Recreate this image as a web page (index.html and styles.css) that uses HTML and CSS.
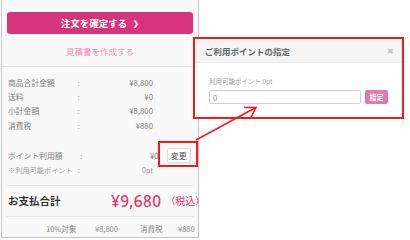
FILE: index.html
```html
<!DOCTYPE html>
<html lang="ja">
<head>
  <meta charset="UTF-8" />
  <title>ご注文内容</title>
  <link rel="stylesheet" href="styles.css">
</head>
<body>
  <div class="stage">
    <div class="summary">
      <div class="summary-top">
        <button class="btn-order">注文を確定する <span class="chev">&#x276F;</span></button>
        <div class="estimate">見積書を作成する</div>
      </div>

      <div class="rows">
        <div class="row"><span class="lbl">商品合計金額</span><span class="colon">:</span><span class="val">¥8,800</span></div>
        <div class="row"><span class="lbl">送料</span><span class="colon">:</span><span class="val">¥0</span></div>
        <div class="row"><span class="lbl">小計金額</span><span class="colon">:</span><span class="val">¥8,800</span></div>
        <div class="row"><span class="lbl">消費税</span><span class="colon">:</span><span class="val">¥880</span></div>
      </div>

      <div class="rows points">
        <div class="row"><span class="lbl">ポイント利用額</span><span class="colon">:</span><span class="val">¥0</span><button class="btn-change">変更</button></div>
        <div class="row small"><span class="lbl">※利用可能ポイント</span><span class="colon">:</span><span class="val">0pt</span></div>
      </div>

      <div class="total">
        <span class="total-lbl">お支払合計</span>
        <span class="total-val">¥9,680</span>
        <span class="total-tax">（税込）</span>
      </div>

      <div class="tax-row">
        <span class="t1">10%対象</span>
        <span class="t2">¥8,800</span>
        <span class="t3">消費税</span>
        <span class="t4">¥880</span>
      </div>
    </div>

    <!-- 注釈 -->
    <div class="mark"></div>

    <div class="modal">
      <div class="modal-head">
        <span class="modal-title">ご利用ポイントの指定</span>
        <span class="modal-close">&#x2716;</span>
      </div>
      <div class="modal-body">
        <div class="avail">利用可能ポイント 0pt</div>
        <div class="point-form">
          <input type="text" value="0" class="point-input" />
          <button class="btn-apply">指定</button>
        </div>
      </div>
    </div>

    <svg class="arrow" width="410" height="240" viewBox="0 0 410 240">
      <line x1="196" y1="140" x2="255" y2="108" stroke="#f21c1c" stroke-width="1.6" />
      <polyline points="244,107.5 256,107.5 251,117" fill="none" stroke="#f21c1c" stroke-width="1.6" stroke-linejoin="miter" />
    </svg>
  </div>
</body>
</html>
```

FILE: styles.css
```css
:root {
  --pink: #d6357c;
  --pink-light: #e07aa8;
  --text: #666;
  --line: #e3e3e3;
  --red: #f21c1c;
}

body {
  margin: 0;
  background: #fff;
  font-family: "Noto Sans CJK JP", "Noto Sans", sans-serif;
  color: var(--text);
}

.stage {
  position: relative;
  width: 410px;
  height: 240px;
}

.summary {
  width: 196px;
  height: 237px;
  background: #f9f9f9;
  border: 1px solid #c6c6c6;
  border-top: none;
  box-sizing: content-box;
  margin-left: 1px;
}

.summary-top {
  padding: 12px 5px 0;
  border-bottom: 1px solid var(--line);
  height: 54px;
}

.btn-order {
  display: flex;
  align-items: center;
  justify-content: center;
  gap: 6px;
  width: 100%;
  height: 22px;
  border: none;
  border-radius: 3px;
  background: var(--pink);
  color: #fff;
  font-family: inherit;
  font-size: 9.5px;
  font-weight: bold;
  padding: 0;
}

.chev {
  font-size: 7px;
}

.estimate {
  margin-top: 11px;
  text-align: center;
  font-size: 8.5px;
  color: #ec8db3;
}

.rows {
  padding: 8px 6px 0;
}

.row {
  display: flex;
  align-items: center;
  height: 14.3px;
  font-size: 7.8px;
  color: #808080;
}

.lbl {
  width: 74px;
}

.colon {
  color: #aaa;
}

.val {
  width: 78px;
  text-align: right;
  margin-left: auto;
  margin-right: 39px;
}

.points {
  padding-top: 16px;
  padding-bottom: 8px;
  border-bottom: 1px solid var(--line);
  margin: 0 5px;
  padding-left: 1px;
  padding-right: 1px;
}

.points .row:first-child .val {
  margin-right: 8px;
}

.row.small {
  font-size: 7.2px;
  color: #999;
}

.btn-change {
  width: 25px;
  height: 15px;
  border: 1px solid #ddd;
  border-radius: 2px;
  background: #fff;
  color: #555;
  font-family: inherit;
  font-size: 8px;
  padding: 0;
  margin-right: 1px;
}

.total {
  display: flex;
  align-items: center;
  white-space: nowrap;
  height: 30px;
  margin: 0 5px;
  padding-left: 1px;
  border-bottom: 1px solid var(--line);
}

.total-lbl {
  font-size: 10.5px;
  font-weight: bold;
  color: #333;
  width: 103px;
  flex-shrink: 0;
}

.total-val {
  font-size: 15.5px;
  font-weight: 500;
  color: #f2316c;
  font-family: "Noto Sans", sans-serif;
  letter-spacing: 0.3px;
}

.total-tax {
  font-size: 10px;
  color: #f2316c;
  margin-left: 4px;
}

.tax-row {
  display: flex;
  align-items: center;
  height: 24px;
  font-size: 7.5px;
  color: #888;
  padding-left: 44px;
}

.t1 { width: 49px; }
.t2 { width: 45px; }
.t3 { width: 38px; }

.mark {
  position: absolute;
  left: 158px;
  top: 141px;
  width: 36px;
  height: 22px;
  border: 2px solid var(--red);
}

.arrow {
  position: absolute;
  left: 0;
  top: 0;
}

.modal {
  position: absolute;
  left: 193px;
  top: 37px;
  width: 207px;
  height: 78px;
  border: 2px solid var(--red);
  background: #fff;
}

.modal-head {
  display: flex;
  align-items: center;
  justify-content: space-between;
  height: 23px;
  padding: 0 8px 0 10px;
  background: #f5f5f5;
  border-bottom: 1px solid #ececec;
}

.modal-title {
  font-size: 8.5px;
  font-weight: bold;
  color: #666;
}

.modal-close {
  font-size: 8px;
  color: #c4c4c4;
}

.modal-body {
  padding: 13px 14px 0;
}

.avail {
  font-size: 6.5px;
  color: #999;
  margin-bottom: 4px;
}

.point-form {
  display: flex;
  gap: 4px;
}

.point-input {
  width: 153px;
  height: 14px;
  box-sizing: border-box;
  border: 1px solid #d0d0d0;
  border-radius: 2px;
  font-family: inherit;
  font-size: 7.5px;
  color: #888;
  padding: 0 3px;
}

.btn-apply {
  width: 23px;
  height: 14px;
  border: none;
  border-radius: 2px;
  background: var(--pink-light);
  color: #fff;
  font-family: inherit;
  font-size: 7px;
  font-weight: bold;
  padding: 0;
}
```
